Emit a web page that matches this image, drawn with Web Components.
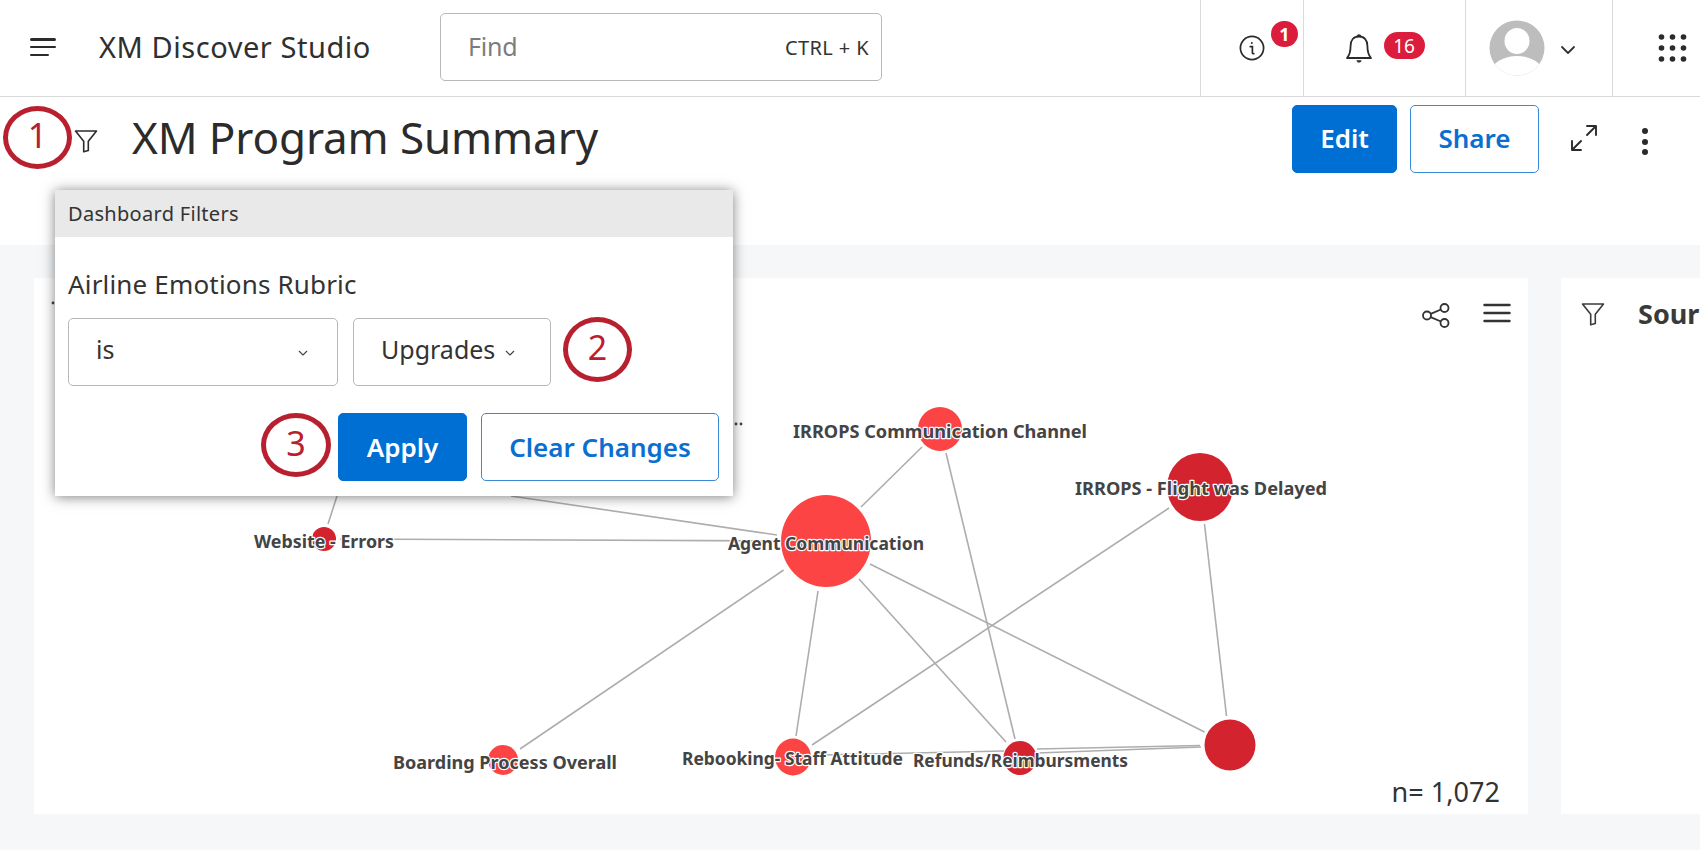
<!DOCTYPE html>
<html>
<head>
<meta charset="utf-8">
<title>XM Program Summary</title>
<style>
  html, body { margin: 0; padding: 0; height: 850px; overflow: hidden; background: #fff; }
  body { font-family: "Noto Sans", "Liberation Sans", sans-serif; color: #2b2b2b; }
</style>
</head>
<body>
<x-app>
  <x-topbar>XM Discover Studio</x-topbar>
  <x-dash-header>XM Program Summary</x-dash-header>
  <x-board></x-board>
  <x-filter-popup></x-filter-popup>
  <x-callout style="left:3px;top:106px;width:69px;height:63px">1</x-callout>
  <x-callout style="left:563px;top:317px;width:69px;height:65px">2</x-callout>
  <x-callout style="left:261px;top:413px;width:70px;height:64px">3</x-callout>
</x-app>

<script>
const FILTER_ICON = `<svg viewBox="0 0 24 24" fill="none" stroke="currentColor" stroke-width="1.6" stroke-linejoin="round" stroke-linecap="round"><path d="M1.5 2h21l-8.2 10.2V21.5l-4.6 1.2V12.2z"/></svg>`;
const CHEVRON = `<svg viewBox="0 0 16 10" fill="none" stroke="currentColor" stroke-width="1.8" stroke-linecap="round" stroke-linejoin="round"><path d="M2 2l6 6 6-6"/></svg>`;

class XApp extends HTMLElement {
  connectedCallback() {
    this.attachShadow({ mode: 'open' });
    this.shadowRoot.innerHTML = `
      <style>
        :host { display: flex; flex-direction: column; position: relative; width: 1700px; height: 850px; overflow: hidden; }
      </style>
      <slot></slot>
    `;
  }
}

class XTopbar extends HTMLElement {
  connectedCallback() {
    this.attachShadow({ mode: 'open' });
    this.shadowRoot.innerHTML = `
      <style>
        :host {
          display: grid;
          grid-template-columns: 440px 442px 1fr 103px 162px 147px 88px;
          height: 96px;
          border-bottom: 1px solid #d9d9d9;
          background: #fff;
          box-sizing: content-box;
          flex: none;
        }
        .brand { display: flex; align-items: center; padding-left: 30px; }
        .menu { width: 26px; height: 18px; display: flex; flex-direction: column; justify-content: space-between; margin-right: 43px; margin-top: -2px; }
        .menu i { display: block; height: 2.5px; background: #2b2b2b; border-radius: 2px; }
        .menu i:last-child { width: 19px; }
        .title { font-size: 29px; letter-spacing: 0.55px; color: #2f2f2f; white-space: nowrap; margin-top: -3px; }
        .search {
          align-self: start; margin-top: 13px; height: 68px; box-sizing: border-box;
          border: 1px solid #b8b8b8; border-radius: 5px;
          display: flex; align-items: center; justify-content: space-between;
          padding: 0 12px 0 27px;
        }
        .find { font-size: 25px; letter-spacing: -0.2px; color: #7d7d7d; margin-top: -3px; }
        .key { font-size: 20px; letter-spacing: 0.4px; color: #333; margin-top: 1px; }
        .cell { border-left: 1px solid #d9d9d9; display: flex; align-items: center; justify-content: center; position: relative; }
        .info svg { width: 26px; height: 26px; color: #2b2b2b; }
        .count {
          background: #dc1c3c; color: #fff; font-weight: 700; display: flex; align-items: center; justify-content: center; border-radius: 14px;
        }
        .info .count { position: absolute; left: 70px; top: 21px; width: 27px; height: 26px; font-size: 18px; }
        .bell { gap: 11px; }
        .bell svg { width: 28px; height: 31px; margin-top: 1px; color: #2b2b2b; }
        .bell .count { width: 41px; height: 27px; font-size: 19px; font-weight: 400; margin-top: -5px; }
        .user { gap: 15px; padding-right: 13px; }
        .user .av { width: 56px; height: 56px; }
        .user .chev { display: flex; width: 16px; height: 10px; color: #333; margin-top: 3px; }
        .apps { padding-left: 32px; }
        .apps svg { width: 29px; height: 28px; color: #2b2b2b; margin-top: -1px; }
      </style>
      <div class="brand">
        <div class="menu"><i></i><i></i><i></i></div>
        <div class="title"><slot></slot></div>
      </div>
      <div class="search"><span class="find">Find</span><span class="key">CTRL + K</span></div>
      <div></div>
      <div class="cell info">
        <svg viewBox="0 0 26 26" fill="none" stroke="currentColor" stroke-width="1.7"><circle cx="13" cy="13" r="11.6"/><path d="M11.2 11.6h2.2v6.2c0 .8.5 1 1.4.9" stroke-linecap="round"/><circle cx="12.8" cy="8" r="1" fill="currentColor" stroke="none"/></svg>
        <span class="count">1</span>
      </div>
      <div class="cell bell">
        <svg viewBox="0 0 28 31" fill="none" stroke="currentColor" stroke-width="1.8" stroke-linejoin="round"><path d="M14 3.5c-5.4 0-8.4 3.8-8.4 9.2 0 6.2-1.2 9.6-3.6 12.3h24c-2.4-2.7-3.6-6.1-3.6-12.3 0-5.4-3-9.2-8.4-9.2z"/><path d="M12.4 3.4a1.7 1.7 0 0 1 3.2 0" /><path d="M11.4 27.2h5.2c-.4 1.6-1.3 2.4-2.6 2.4s-2.2-.8-2.6-2.4z" fill="currentColor" stroke="none"/></svg>
        <span class="count">16</span>
      </div>
      <div class="cell user">
        <svg class="av" viewBox="0 0 56 56">
          <defs><clipPath id="av"><circle cx="28" cy="28" r="27.5"/></clipPath></defs>
          <g clip-path="url(#av)">
            <rect width="56" height="56" fill="#bdbdbd"/>
            <ellipse cx="28" cy="21" rx="12.5" ry="13" fill="#fff"/>
            <ellipse cx="28" cy="51" rx="25" ry="15" fill="#fff"/>
          </g>
        </svg>
        <span class="chev">${CHEVRON}</span>
      </div>
      <div class="cell apps">
        <svg viewBox="0 0 29 28" fill="currentColor">
          <circle cx="3.5" cy="3" r="2.8"/><circle cx="14.5" cy="3" r="2.8"/><circle cx="25.5" cy="3" r="2.8"/>
          <circle cx="3.5" cy="14" r="2.8"/><circle cx="14.5" cy="14" r="2.8"/><circle cx="25.5" cy="14" r="2.8"/>
          <circle cx="3.5" cy="25" r="2.8"/><circle cx="14.5" cy="25" r="2.8"/><circle cx="25.5" cy="25" r="2.8"/>
        </svg>
      </div>
    `;
  }
}

class XBtn extends HTMLElement {
  connectedCallback() {
    this.attachShadow({ mode: 'open' });
    this.shadowRoot.innerHTML = `
      <style>
        :host {
          display: inline-flex; align-items: center; justify-content: center; box-sizing: border-box;
          height: 68px; border-radius: 5px; font-size: 26px; font-weight: 600;
          border: 1px solid #3a8ad8; color: #0a6fd0; background: #fff;
        }
        :host([primary]) { background: #006fd3; color: #fff; border-color: #006fd3; }
      </style>
      <slot></slot>
    `;
  }
}

class XDashHeader extends HTMLElement {
  connectedCallback() {
    this.attachShadow({ mode: 'open' });
    this.shadowRoot.innerHTML = `
      <style>
        :host { display: flex; align-items: flex-start; height: 148px; background: #fff; flex: none; }
        .filter { width: 24px; height: 24px; margin: 32px 0 0 74px; color: #2b2b2b; }
        h1 { margin: 10px 0 0 34px; font-size: 44px; font-weight: 400; line-height: 60px; letter-spacing: -0.12px; color: #2b2b2b; flex: 1; white-space: nowrap; }
        .actions { display: flex; align-items: flex-start; margin-top: 8px; }
        x-btn.edit { width: 105px; margin-right: 13px; padding-bottom: 3px; }
        x-btn.share { width: 129px; margin-right: 31px; padding-bottom: 3px; }
        .expand { width: 28px; height: 28px; margin-top: 19px; color: #2b2b2b; margin-right: 44px; }
        .kebab { display: flex; flex-direction: column; gap: 4.5px; margin-top: 23px; width: 58px; }
        .kebab i { width: 6px; height: 6px; border-radius: 50%; background: #2b2b2b; }
      </style>
      <div class="filter">${FILTER_ICON}</div>
      <h1><slot></slot></h1>
      <div class="actions">
        <x-btn primary class="edit">Edit</x-btn>
        <x-btn class="share">Share</x-btn>
        <svg class="expand" viewBox="0 0 28 28" fill="none" stroke="currentColor" stroke-width="1.9" stroke-linecap="round" stroke-linejoin="round"><path d="M17 2h9v9M26 2L17 11M2 17v9h9M2 26l9-9"/></svg>
        <div class="kebab"><i></i><i></i><i></i></div>
      </div>
    `;
  }
}

class XWidget extends HTMLElement {
  connectedCallback() {
    this.attachShadow({ mode: 'open' });
    this.shadowRoot.innerHTML = `
      <style>
        :host { display: block; position: relative; background: #fff; height: 536px; box-sizing: border-box; }
      </style>
      <slot></slot>
    `;
  }
}

class XGraph extends HTMLElement {
  connectedCallback() {
    this.attachShadow({ mode: 'open' });
    const light = '#fc4444', dark = '#d2232f';
    // nodes of the diagram, in page coordinates
    const nodes = [
      [826, 541, 45, 46, light], [940, 429, 22, 22, light], [1200, 487, 33, 34, dark],
      [1230, 745, 25.5, 25.5, dark], [1020, 758, 16.5, 17, dark], [793, 757, 18, 18.5, light],
      [503, 760, 15, 15, light], [324, 539, 12, 12, dark]
    ];
    const edges = [
      [861, 507, 922, 447], [946, 453, 1015, 739], [1204.5, 524, 1226.5, 716], [1169, 508, 812, 745],
      [870, 564, 1204.5, 732], [859, 579, 1006, 742], [818, 591, 796, 736], [783.6, 570, 520, 749],
      [340, 539, 781, 541], [511, 496, 777, 535], [337, 496, 328, 524], [822, 755, 1004, 751],
      [1037, 749, 1200, 745.5], [1037, 753, 1201, 747]
    ];
    const labels = [
      ['Agent Communication', 728, 543, 196], ['IRROPS Communication Channel', 793, 431, 294],
      ['IRROPS - Flight was Delayed', 1075, 488, 252], ['Website - Errors', 254, 541, 140],
      ['Boarding Process Overall', 393, 762, 224], ['Rebooking- Staff Attitude', 682, 758, 221],
      ['Refunds/Reimbursments', 913, 760, 215]
    ];
    this.shadowRoot.innerHTML = `
      <style>
        :host { position: absolute; inset: 0; display: block; }
        svg { display: block; }
        text {
          font: 700 18px "Noto Sans", "Liberation Sans", sans-serif; fill: #444;
          stroke: #fff; stroke-width: 2.4px; paint-order: stroke; stroke-linejoin: round;
          dominant-baseline: central;
        }
        line { stroke: #adadad; stroke-width: 1.6; }
      </style>
      <svg width="1493" height="536" viewBox="34 278 1493 536">
        ${edges.map(e => `<line x1="${e[0]}" y1="${e[1]}" x2="${e[2]}" y2="${e[3]}"/>`).join('')}
        ${nodes.map(n => `<ellipse cx="${n[0]}" cy="${n[1]}" rx="${n[2]}" ry="${n[3]}" fill="${n[4]}"/>`).join('')}
        ${labels.map(l => `<text x="${l[1]}" y="${l[2]}" textLength="${l[3]}" lengthAdjust="spacingAndGlyphs">${l[0]}</text>`).join('')}
        <circle cx="736" cy="424" r="1.4" fill="#444"/><circle cx="741" cy="424" r="1.4" fill="#444"/>
        <circle cx="53" cy="303" r="1.4" fill="#444"/>
      </svg>
    `;
  }
}

class XBoard extends HTMLElement {
  connectedCallback() {
    this.attachShadow({ mode: 'open' });
    this.shadowRoot.innerHTML = `
      <style>
        :host { display: grid; grid-template-columns: 1494px 1fr; gap: 33px; flex: 1; background: #f6f7f9; padding: 33px 0 36px 34px; }
        .tools { position: absolute; top: 25px; right: 17px; display: flex; gap: 33px; color: #333; }
        .tools svg { display: block; }
        .head { display: flex; align-items: center; height: 30px; padding: 21px 0 0 20px; gap: 33px; color: #3a3a3a; white-space: nowrap; }
        .head .f { width: 24px; height: 24px; flex: none; }
        .head b { font-size: 27px; font-weight: 700; line-height: 30px; }
        .n { position: absolute; right: 28px; bottom: 4px; font-size: 27px; letter-spacing: 0.05px; color: #333; }
      </style>
      <x-widget>
        <x-graph></x-graph>
        <div class="tools">
          <svg width="28" height="25" viewBox="0 0 28 25" fill="none" stroke="currentColor" stroke-width="1.8"><circle cx="5" cy="12.5" r="4"/><circle cx="22.5" cy="5" r="4"/><circle cx="22.5" cy="20" r="4"/><path d="M8.7 10.9l10.2-4.4M8.7 14.1l10.2 4.4"/></svg>
          <svg width="28" height="20" viewBox="0 0 28 20" fill="none" stroke="currentColor" stroke-width="2.4" stroke-linecap="round"><path d="M1.5 2h25M1.5 10h25M1.5 18h25"/></svg>
        </div>
        <div class="n">n= 1,072</div>
      </x-widget>
      <x-widget>
        <div class="head"><div class="f">${FILTER_ICON}</div><b>Sour</b></div>
      </x-widget>
    `;
  }
}

class XSelect extends HTMLElement {
  connectedCallback() {
    this.attachShadow({ mode: 'open' });
    this.shadowRoot.innerHTML = `
      <style>
        :host {
          display: flex; align-items: center; height: 68px; box-sizing: border-box;
          border: 1px solid #b8b8b8; border-radius: 5px; padding-left: 27px; font-size: 25px; color: #333;
        }
        .txt { margin-top: -6px; }
        .chev { display: block; width: 10px; height: 7px; color: #444; margin-top: 3px; }
        .chev svg { display: block; }
      </style>
      <span class="txt"><slot></slot></span>
      <span class="chev">${CHEVRON}</span>
    `;
  }
}

class XFilterPopup extends HTMLElement {
  connectedCallback() {
    this.attachShadow({ mode: 'open' });
    this.shadowRoot.innerHTML = `
      <style>
        :host {
          position: absolute; left: 55px; top: 190px; width: 678px; height: 306px; display: block;
          background: #fff; box-shadow: 0 1px 12px rgba(0,0,0,.5);
        }
        .hd { height: 47px; background: #e9e9e9; display: flex; align-items: center; padding-left: 13px; font-size: 20px; letter-spacing: 0.3px; color: #333; }
        .label { margin: 29px 13px 0; font-size: 26px; line-height: 36px; letter-spacing: 0.17px; color: #333; }
        .row { display: flex; gap: 15px; margin: 16px 13px 0; }
        x-select.val { width: 198px; gap: 10px; }
        x-select.op { width: 270px; justify-content: space-between; padding-right: 29px; }
        .btns { display: flex; justify-content: flex-end; gap: 14px; margin: 27px 14px 0; }
        x-btn.apply { width: 129px; }
        x-btn.clear { width: 238px; }
      </style>
      <div class="hd">Dashboard Filters</div>
      <div class="label">Airline Emotions Rubric</div>
      <div class="row">
        <x-select class="op">is</x-select>
        <x-select class="val">Upgrades</x-select>
      </div>
      <div class="btns">
        <x-btn primary class="apply">Apply</x-btn>
        <x-btn class="clear">Clear Changes</x-btn>
      </div>
    `;
  }
}

class XCallout extends HTMLElement {
  connectedCallback() {
    this.attachShadow({ mode: 'open' });
    this.shadowRoot.innerHTML = `
      <style>
        :host {
          position: absolute; display: flex; align-items: center; justify-content: center; box-sizing: border-box;
          border: 5.5px solid #b9202f; border-radius: 50%; color: #b9202f; font-size: 34px; background: transparent;
        }
        span { margin-top: -5px; }
      </style>
      <span><slot></slot></span>
    `;
  }
}

customElements.define('x-app', XApp);
customElements.define('x-topbar', XTopbar);
customElements.define('x-btn', XBtn);
customElements.define('x-dash-header', XDashHeader);
customElements.define('x-widget', XWidget);
customElements.define('x-graph', XGraph);
customElements.define('x-board', XBoard);
customElements.define('x-select', XSelect);
customElements.define('x-filter-popup', XFilterPopup);
customElements.define('x-callout', XCallout);
</script>
</body>
</html>
